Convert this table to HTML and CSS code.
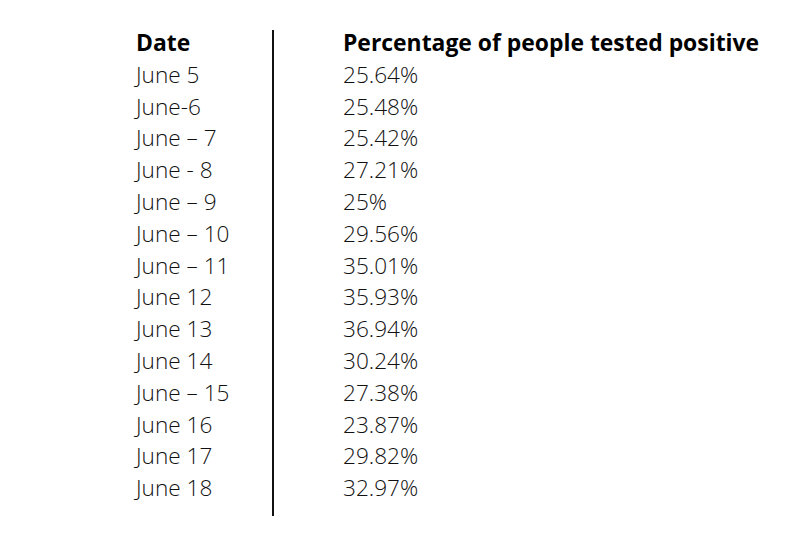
FILE: index.html
```html
<!DOCTYPE html>
<html lang="en">
<head>
<meta charset="utf-8">
<title>Percentage of people tested positive</title>
<link rel="stylesheet" href="styles.css">
</head>
<body>
<div class="table">
  <div class="col col-date">
    <div class="head">Date</div>
    <div>June 5</div>
    <div>June-6</div>
    <div>June – 7</div>
    <div>June - 8</div>
    <div>June – 9</div>
    <div>June – 10</div>
    <div>June – 11</div>
    <div>June 12</div>
    <div>June 13</div>
    <div>June 14</div>
    <div>June – 15</div>
    <div>June 16</div>
    <div>June 17</div>
    <div>June 18</div>
  </div>
  <div class="divider"></div>
  <div class="col col-value">
    <div class="head">Percentage of people tested positive</div>
    <div>25.64%</div>
    <div>25.48%</div>
    <div>25.42%</div>
    <div>27.21%</div>
    <div>25%</div>
    <div>29.56%</div>
    <div>35.01%</div>
    <div>35.93%</div>
    <div>36.94%</div>
    <div>30.24%</div>
    <div>27.38%</div>
    <div>23.87%</div>
    <div>29.82%</div>
    <div>32.97%</div>
  </div>
</div>
</body>
</html>
```
FILE: styles.css
```css
html, body {
  margin: 0;
  padding: 0;
  background: #ffffff;
}
body {
  width: 801px;
  height: 534px;
  overflow: hidden;
  font-family: "Open Sans", "Liberation Sans", sans-serif;
  color: #111;
}
.table {
  display: flex;
  align-items: flex-start;
  padding: 27px 0 0 136px;
}
.col {
  font-size: 22.6px;
  line-height: 31.8px;
  font-weight: 350;
}
.col-date {
  width: 136px;
}
.head {
  font-size: 22.9px;
  font-weight: 700;
  color: #000;
}
.divider {
  width: 2px;
  height: 486px;
  margin-top: 3px;
  background: #111;
}
.col-value {
  margin-left: 69px;
}
```
